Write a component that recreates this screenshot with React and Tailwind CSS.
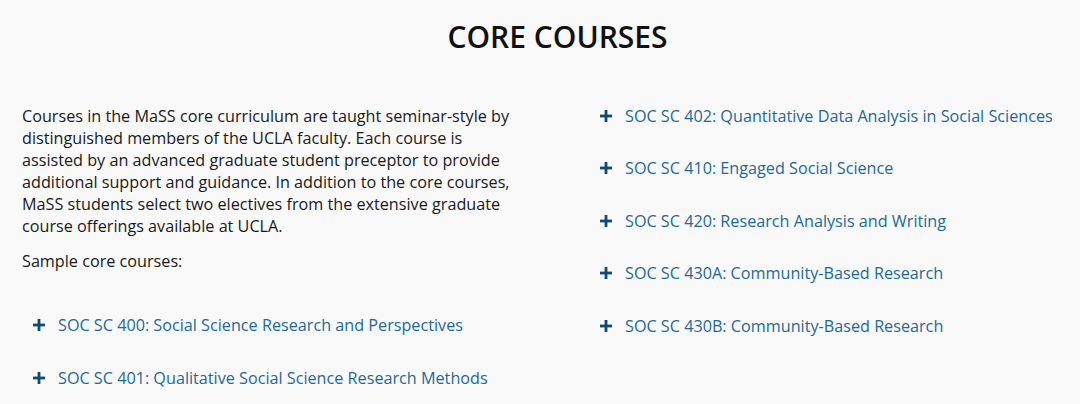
const leftCourses = [
    'SOC SC 400: Social Science Research and Perspectives',
    'SOC SC 401: Qualitative Social Science Research Methods',
]

const rightCourses = [
    'SOC SC 402: Quantitative Data Analysis in Social Sciences',
    'SOC SC 410: Engaged Social Science',
    'SOC SC 420: Research Analysis and Writing',
    'SOC SC 430A: Community-Based Research',
    'SOC SC 430B: Community-Based Research',
]

const PlusIcon = () => (
    <svg width="12" height="12" viewBox="0 0 12 12" className="shrink-0">
        <rect x="4.6" y="0" width="2.8" height="12" fill="#0f4c75" />
        <rect x="0" y="4.6" width="12" height="2.8" fill="#0f4c75" />
    </svg>
)

const CourseItem = ({ title, left }) => (
    <li className={`flex items-center h-[52.5px] gap-[13px] ${left ? 'pl-[11px]' : 'pl-[10px]'}`}>
        <PlusIcon />
        <a href='#' className='text-[16.2px] leading-[22px] text-[#1d6a96]'>{title}</a>
    </li>
)

export default function App() {
    return (
        <div className="min-h-[404px] w-[1080px] bg-[#f9f9f9] text-[#1a1a1a]" style={{ fontFamily: '"Open Sans", "Noto Sans", sans-serif' }}>
            <h2 className='pt-[19px] pl-[35px] text-center text-[30px] leading-[36px] font-semibold text-[#111]'>
                CORE COURSES
            </h2>
            <div className='flex gap-[68px] px-[22px] mt-[33px]'>
                <div className='w-[500px] pt-[17px] text-[16.2px] leading-[22px]'>
                    <p>
                        Courses in the MaSS core curriculum are taught seminar-style by distinguished members of the UCLA faculty. Each course is assisted by an advanced graduate student preceptor to provide additional support and guidance. In addition to the core courses, MaSS students select two electives from the extensive graduate course offerings available at UCLA.
                    </p>
                    <p className='mt-[13px]'>Sample core courses:</p>
                    <ul className='mt-[27px]'>
                        {leftCourses.map(c => <CourseItem key={c} title={c} left />)}
                    </ul>
                </div>
                <ul className='flex-1 pt-[1.5px]'>
                    {rightCourses.map(c => <CourseItem key={c} title={c} />)}
                </ul>
            </div>
        </div>
    )
}
